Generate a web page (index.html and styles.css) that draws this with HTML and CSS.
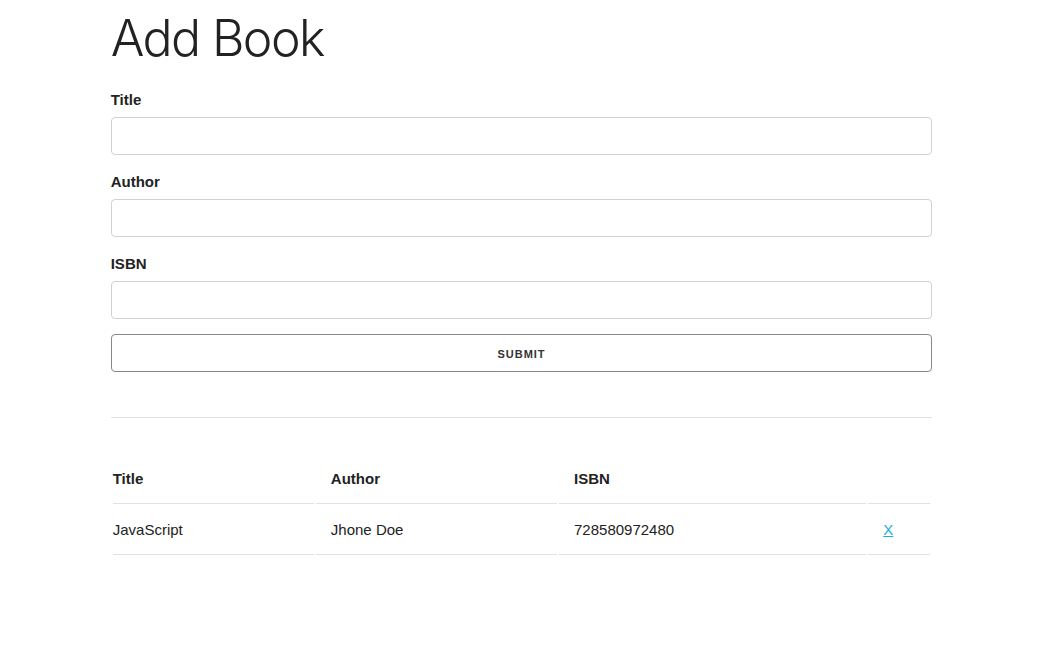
FILE: index.html
```html
<!DOCTYPE html>
<html>
<head>
<meta charset="utf-8">
<title>Book List</title>
<link rel="stylesheet" href="styles.css">
</head>
<body>
<div class="container">
  <h1 class="page-title">Add Book</h1>
  <form class="book-form">
    <label class="field-label" for="title">Title</label>
    <input class="field-input" type="text" id="title">
    <label class="field-label" for="author">Author</label>
    <input class="field-input" type="text" id="author">
    <label class="field-label" for="isbn">ISBN</label>
    <input class="field-input" type="text" id="isbn">
    <input class="submit-button" type="submit" value="Submit">
  </form>
  <hr class="divider">
  <table class="book-table">
    <thead>
      <tr>
        <th class="col-title">Title</th>
        <th class="col-author">Author</th>
        <th class="col-isbn">ISBN</th>
        <th class="col-action"></th>
      </tr>
    </thead>
    <tbody>
      <tr>
        <td>JavaScript</td>
        <td>Jhone Doe</td>
        <td>728580972480</td>
        <td><a href="#" class="delete-link">X</a></td>
      </tr>
    </tbody>
  </table>
</div>
</body>
</html>
```
FILE: styles.css
```css
html {
  font-size: 62.5%;
}
body {
  margin: 8px;
  font-size: 15px;
  line-height: 1.6;
  font-weight: 400;
  font-family: "Liberation Sans", Arial, sans-serif;
  color: #222;
  background: #fff;
}
.container {
  width: 80%;
  max-width: 960px;
  margin: 0 auto;
  box-sizing: border-box;
}
.page-title {
  margin: 0 0 20px 0;
  font-family: Inter, Roboto, "Liberation Sans", sans-serif;
  font-size: 50px;
  font-weight: 300;
  line-height: 1.2;
  letter-spacing: -1.6px;
}
.book-form {
  display: flow-root;
  margin: 0;
}
.field-label {
  display: block;
  margin-bottom: 5px;
  font-weight: 700;
}
.field-input {
  display: block;
  width: 100%;
  height: 38px;
  padding: 6px 10px;
  background: #fff;
  border: 1px solid #d1d1d1;
  border-radius: 4px;
  box-shadow: none;
  box-sizing: border-box;
  margin: 0 0 15px 0;
  font: inherit;
}
.submit-button {
  display: block;
  width: 100%;
  height: 38px;
  padding: 0 30px;
  margin: 0 0 15px 0;
  color: #333;
  text-align: center;
  font-family: "Liberation Sans", Arial, sans-serif;
  font-size: 11px;
  font-weight: 700;
  line-height: 38px;
  letter-spacing: 1px;
  text-transform: uppercase;
  background: transparent;
  border: 1px solid #888;
  border-radius: 4px;
  box-sizing: border-box;
  cursor: pointer;
}
.divider {
  margin: 30px 0 35px 0;
  border: 0;
  border-top: 1px solid #e1e1e1;
}
.book-table {
  width: 100%;
  border-spacing: 2px;
}
.book-table th,
.book-table td {
  padding: 12px 15px;
  text-align: left;
  border-bottom: 1px solid #e1e1e1;
}
.book-table th {
  font-weight: 700;
}
.book-table th:first-child,
.book-table td:first-child {
  padding-left: 0;
}
.book-table th:last-child,
.book-table td:last-child {
  padding-right: 0;
}
.col-title {
  width: 186px;
}
.col-author {
  width: 211px;
}
.col-isbn {
  width: 277px;
}
.col-action {
  width: 47px;
}
.delete-link {
  color: #1eaedb;
}
```
